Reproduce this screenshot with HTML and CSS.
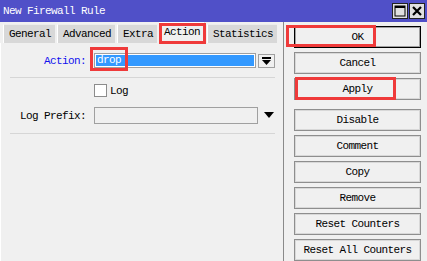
FILE: index.html
```html
<!DOCTYPE html>
<html lang="en">
<head>
  <meta charset="UTF-8">
  <title>New Firewall Rule</title>
  <link rel="stylesheet" href="styles.css">
</head>
<body>
  <div class="window">
    <div class="titlebar">
      <span class="title">New Firewall Rule</span>
      <div class="title-btns">
        <span class="tbtn">
          <svg width="12" height="12" viewBox="0 0 12 12"><rect x="1" y="1" width="10" height="10" fill="none" stroke="#000" stroke-width="1"/><rect x="1" y="1" width="10" height="2" fill="#000"/></svg>
        </span>
        <span class="tbtn">
          <svg width="12" height="12" viewBox="0 0 12 12"><path d="M2 2 L10 10 M10 2 L2 10" stroke="#000" stroke-width="2.2"/></svg>
        </span>
      </div>
    </div>

    <div class="main">
      <div class="left">
        <div class="tabs">
          <div class="tab">General</div>
          <div class="tab">Advanced</div>
          <div class="tab">Extra</div>
          <div class="tab active">Action</div>
          <div class="tab">Statistics</div>
        </div>

        <div class="panel">
          <div class="row">
            <label class="lbl blue">Action:</label>
            <div class="select">drop</div>
            <span class="drop-btn">
              <svg width="9" height="8" viewBox="0 0 9 8"><rect x="0" y="0" width="9" height="2" fill="#000"/><path d="M0 3 H9 L4.5 8 Z" fill="#000"/></svg>
            </span>
          </div>
          <div class="sep"></div>
          <div class="row check-row">
            <span class="lbl"></span>
            <span class="checkbox"></span>
            <span class="check-text">Log</span>
          </div>
          <div class="row prefix-row">
            <label class="lbl">Log Prefix:</label>
            <div class="input"></div>
            <svg class="arrow" width="10" height="6" viewBox="0 0 10 6"><path d="M0 0 H10 L5 6 Z" fill="#000"/></svg>
          </div>
          <div class="sep"></div>
        </div>
      </div>

      <div class="right">
        <button class="btn default">OK</button>
        <button class="btn">Cancel</button>
        <button class="btn">Apply</button>
        <button class="btn spaced">Disable</button>
        <button class="btn">Comment</button>
        <button class="btn">Copy</button>
        <button class="btn">Remove</button>
        <button class="btn">Reset Counters</button>
        <button class="btn">Reset All Counters</button>
      </div>
    </div>

    <!-- red annotation boxes drawn over the screenshot -->
    <div class="mark mark-tab"></div>
    <div class="mark mark-drop"></div>
    <div class="mark mark-ok"></div>
    <div class="mark mark-apply"></div>
  </div>
</body>
</html>
```

FILE: styles.css
```css
body {
  margin: 0;
  padding: 0;
  background-color: #f0f0f0;
  font-family: 'Liberation Mono', 'DejaVu Sans Mono', monospace;
  font-size: 11px;
  letter-spacing: -0.6px;
  color: #000;
}

.window {
  position: relative;
  width: 427px;
  height: 261px;
  overflow: hidden;
  background: #f0f0f0;
}

.titlebar {
  height: 22px;
  background-color: #5050c8;
  color: #fff;
  display: flex;
  align-items: center;
  justify-content: space-between;
  padding-left: 3px;
}

.title-btns {
  display: flex;
  gap: 1px;
  padding-right: 2px;
}

.tbtn {
  width: 14px;
  height: 14px;
  border: 1px solid #222;
  background: #e0e0e0;
  display: flex;
  align-items: center;
  justify-content: center;
}

.main {
  display: flex;
  height: 239px;
}

.left {
  width: 283px;
  border-right: 1px solid #8a8a8a;
  display: flex;
  flex-direction: column;
}

.tabs {
  display: flex;
  gap: 2px;
  padding: 2px 0 0 3px;
  height: 19px;
  align-items: flex-end;
}

.tab {
  height: 18px;
  line-height: 19px;
  padding: 0 4px 0 5px;
  background: #d8d8d8;
  border-left: 1px solid #fff;
  border-top: 1px solid #ececec;
  white-space: nowrap;
}

.tab.active {
  height: 20px;
  line-height: 19px;
  margin-top: -2px;
  background: #f0f0f0;
  border-left: 1px solid #fff;
  border-top: 1px solid #fff;
  border-right: 1px solid #c8c8c8;
  padding: 0 4px;
}

.panel {
  flex: 1;
  padding-top: 10px;
  border-left: 1px solid #fff;
}

.row {
  display: flex;
  align-items: center;
}

.lbl {
  width: 85px;
  text-align: right;
  margin-right: 8px;
  flex-shrink: 0;
}

.blue {
  color: #1010ee;
}

.select {
  width: 156px;
  height: 12px;
  line-height: 12px;
  padding: 0 2px 1px;
  background: #3399ff;
  color: #fff;
  border: 1px solid #a0a0a0;
  box-shadow: inset 0 0 0 1px #fff;
}

.drop-btn {
  width: 15px;
  height: 12px;
  margin-left: 2px;
  border: 1px solid #a0a0a0;
  background: #f0f0f0;
  display: flex;
  align-items: center;
  justify-content: center;
}

.sep {
  margin: 9px 8px 0 9px;
  height: 1px;
  background: #d6d6d6;
}

.check-row {
  margin-top: 6px;
  height: 13px;
}

.checkbox {
  width: 11px;
  height: 11px;
  background: #fff;
  border: 1px solid #8c8c8c;
}

.check-text {
  margin-left: 3px;
}

.prefix-row {
  margin-top: 10px;
  height: 17px;
}

.input {
  width: 162px;
  height: 15px;
  border: 1px solid #a0a0a0;
  background: #f0f0f0;
}

.arrow {
  margin-left: 6px;
  margin-top: -1px;
}

.right {
  display: flex;
  flex-direction: column;
  gap: 4px;
  padding: 4px 0 0 10px;
}

.btn {
  width: 127px;
  height: 22px;
  padding: 0;
  font-family: inherit;
  font-size: 11px;
  letter-spacing: -0.6px;
  color: #000;
  background: #f0f0f0;
  border: 1px solid #8e8e8e;
  box-shadow: inset 0 0 0 1px #d8d8d8;
  border-radius: 0;
  text-align: center;
}

.btn.default {
  border: 1px solid #000;
  box-shadow: inset 0 0 0 1px #a0a0a0;
}

.btn.spaced {
  margin-top: 5px;
}

.mark {
  position: absolute;
  border: 3px solid #ef3a3a;
  box-sizing: border-box;
}

.mark-tab {
  left: 159px;
  top: 23px;
  width: 47px;
  height: 21px;
}

.mark-drop {
  left: 90px;
  top: 47px;
  width: 38px;
  height: 24px;
}

.mark-ok {
  left: 286px;
  top: 25px;
  width: 90px;
  height: 22px;
}

.mark-apply {
  left: 295px;
  top: 77px;
  width: 101px;
  height: 23px;
}
```
